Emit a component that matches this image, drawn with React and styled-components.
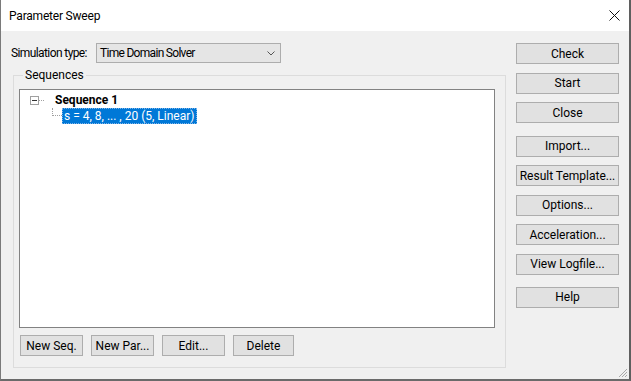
import React from "react";
import styled, { createGlobalStyle } from "styled-components";

const Global = createGlobalStyle`
  html, body { margin: 0; padding: 0; background: #f0f0f0; }
  body { font-family: Roboto, "Noto Sans", sans-serif; font-size: 12px; color: #000; }
  * { box-sizing: border-box; }
`;

const Window = styled.div`
  position: relative;
  width: 631px;
  height: 381px;
  border-left: 1px solid #7a7a7a;
  border-right: 2px solid #5f5f5f;
  border-bottom: 2px solid #6a6a6a;
  background: #f0f0f0;
  display: flex;
  flex-direction: column;
  overflow: hidden;
`;

const TitleBar = styled.div`
  height: 31px;
  flex: none;
  background: #fff;
  display: flex;
  align-items: center;
  justify-content: space-between;
  padding: 0 9px 0 8px;
`;

const Title = styled.span`
  line-height: 16px;
  letter-spacing: -0.2px;
`;

const CloseGlyph = styled.svg`
  width: 11px;
  height: 11px;
  display: block;
`;

const Body = styled.div`
  flex: 1;
  display: flex;
  gap: 9px;
  padding: 12px 0 0 10px;
`;

const LeftCol = styled.div`
  width: 496px;
  display: flex;
  flex-direction: column;
`;

const TypeRow = styled.div`
  display: flex;
  align-items: center;
  height: 20px;
`;

const Label = styled.span`
  width: 85px;
  flex: none;
  white-space: nowrap;
  line-height: 16px;
  letter-spacing: -0.6px;
`;

const Combo = styled.div`
  width: 185px;
  height: 20px;
  border: 1px solid #adadad;
  background: #e5e5e5;
  display: flex;
  align-items: center;
  justify-content: space-between;
  padding: 0 5px 0 3px;
`;

const ComboText = styled.span`
  letter-spacing: -0.7px;
  white-space: nowrap;
`;

const Chevron = styled.svg`
  width: 8px;
  height: 5px;
  display: block;
`;

const Group = styled.fieldset`
  margin: 4px 0 0 2px;
  width: 493px;
  height: 301px;
  border: 1px solid #dcdcdc;
  padding: 6px 10px 10px 5px;
  min-width: 0;
`;

const Legend = styled.legend`
  margin-left: 4px;
  padding: 0 2px;
  line-height: 16px;
`;

const ListBox = styled.div`
  height: 239px;
  background: #fff;
  border: 1px solid #828282;
  padding: 2px 0 0 10px;
`;

const TreeRow = styled.div`
  display: flex;
  align-items: center;
  height: 16px;
`;

const Expander = styled.span`
  width: 9px;
  height: 9px;
  border: 1px solid #a0a0a0;
  display: flex;
  align-items: center;
  justify-content: center;
  flex: none;
  &::after {
    content: "";
    width: 5px;
    height: 1px;
    background: #333;
  }
`;

const HLine = styled.span`
  width: ${(p) => p.$w}px;
  height: 0;
  border-top: 1px dotted #a0a0a0;
  flex: none;
`;

const Bold = styled.span`
  font-weight: bold;
  margin-left: 11px;
  line-height: 16px;
`;

const Elbow = styled.span`
  margin-left: 22px;
  width: 10px;
  height: 8px;
  align-self: flex-start;
  border-left: 1px dotted #a0a0a0;
  border-bottom: 1px dotted #a0a0a0;
  flex: none;
`;

const Selected = styled.span`
  background: #0078d7;
  color: #fff;
  height: 16px;
  line-height: 14px;
  padding: 0 1px;
  border: 1px dotted #7fb4e8;
  margin-top: -1px;
  white-space: nowrap;
`;

const ButtonRow = styled.div`
  display: flex;
  gap: 8px;
  margin: 7px 0 0 1px;
`;

const Btn = styled.div`
  height: 21px;
  width: ${(p) => p.$w || 103}px;
  margin-top: ${(p) => p.$mt || 0}px;
  border: 1px solid #adadad;
  background: #e1e1e1;
  display: flex;
  align-items: center;
  justify-content: center;
  line-height: 16px;
  white-space: nowrap;
  flex: none;
`;

const RightCol = styled.div`
  display: flex;
  flex-direction: column;
  gap: 8.5px;
`;

const Grip = styled.svg`
  position: absolute;
  right: 1px;
  bottom: 1px;
  width: 10px;
  height: 10px;
`;

export default function App() {
  return (
    <>
      <Global />
      <Window>
        <TitleBar>
          <Title>Parameter Sweep</Title>
          <CloseGlyph viewBox="0 0 11 11">
            <path d="M0.5 0.5 L10.5 10.5 M10.5 0.5 L0.5 10.5" stroke="#111" strokeWidth="1" />
          </CloseGlyph>
        </TitleBar>
        <Body>
          <LeftCol>
            <TypeRow>
              <Label>Simulation type:</Label>
              <Combo>
                <ComboText>Time Domain Solver</ComboText>
                <Chevron viewBox="0 0 8 5">
                  <path d="M0.5 0.5 L4 4 L7.5 0.5" fill="none" stroke="#555" strokeWidth="1" />
                </Chevron>
              </Combo>
            </TypeRow>
            <Group>
              <Legend>Sequences</Legend>
              <ListBox>
                <TreeRow>
                  <Expander />
                  <HLine $w={5} />
                  <Bold>Sequence 1</Bold>
                </TreeRow>
                <TreeRow>
                  <Elbow />
                  <Selected>s = 4, 8, ... , 20 (5, Linear)</Selected>
                </TreeRow>
              </ListBox>
              <ButtonRow>
                <Btn $w={63}>New Seq.</Btn>
                <Btn $w={63}>New Par...</Btn>
                <Btn $w={63}>Edit...</Btn>
                <Btn $w={61}>Delete</Btn>
              </ButtonRow>
            </Group>
          </LeftCol>
          <RightCol>
            <Btn>Check</Btn>
            <Btn>Start</Btn>
            <Btn>Close</Btn>
            <Btn $mt={4}>Import...</Btn>
            <Btn>Result Template...</Btn>
            <Btn>Options...</Btn>
            <Btn>Acceleration...</Btn>
            <Btn>View Logfile...</Btn>
            <Btn $mt={3.5}>Help</Btn>
          </RightCol>
        </Body>
        <Grip viewBox="0 0 10 10">
          <path d="M9 1 L1 9 M9 4 L4 9 M9 7 L7 9" stroke="#a8a8a8" strokeWidth="1" />
        </Grip>
      </Window>
    </>
  );
}
